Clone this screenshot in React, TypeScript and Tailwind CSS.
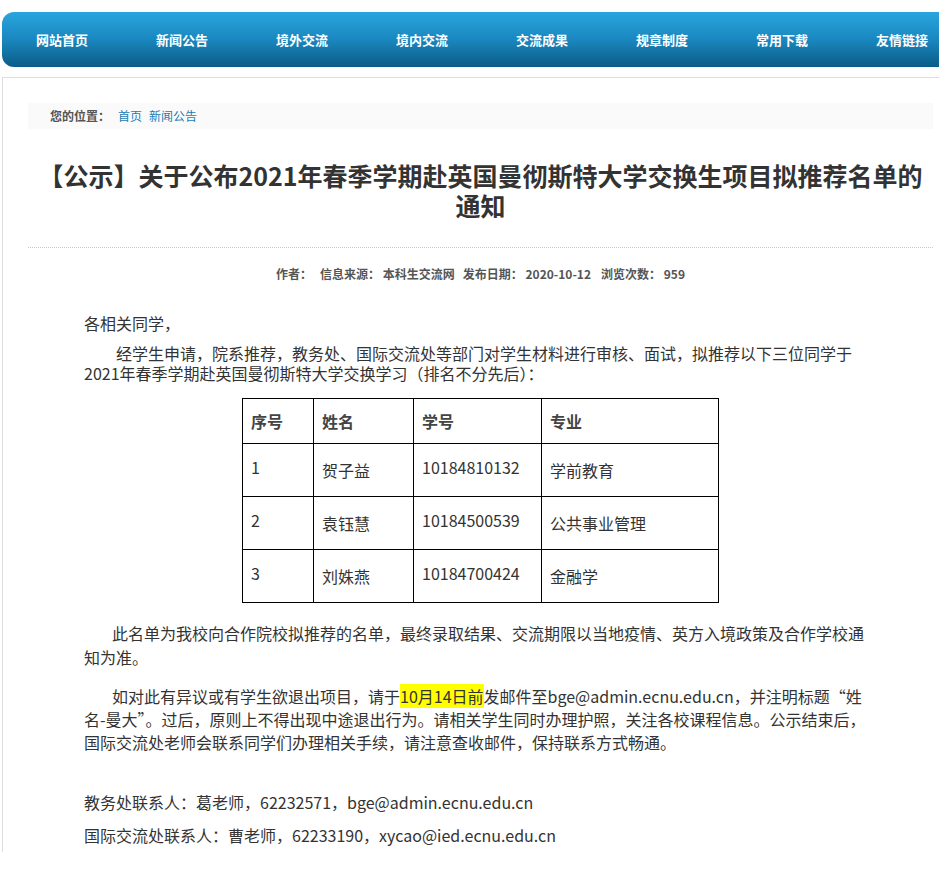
import React from "react";

const navItems = ["网站首页", "新闻公告", "境外交流", "境内交流", "交流成果", "规章制度", "常用下载", "友情链接"];

const rows = [
  ["1", "贺子益", "10184810132", "学前教育"],
  ["2", "袁钰慧", "10184500539", "公共事业管理"],
  ["3", "刘姝燕", "10184700424", "金融学"],
];

export default function App() {
  return (
    <div
      className="w-[939px] overflow-hidden bg-white"
      style={{ fontFamily: '"Noto Sans CJK SC", "Noto Sans", sans-serif' }}
    >
      <div className="ml-[2px] w-[960px] pt-[12px] pb-[40px]">
        {/* Nav */}
        <nav className="flex h-[55px] rounded-l-[12px] bg-gradient-to-b from-[#29a5de] via-[#1a87bf] to-[#0a5d88]">
          {navItems.map((t) => (
            <a
              key={t}
              className="flex w-[120px] items-center justify-center text-[13px] font-bold text-white"
            >
              {t}
            </a>
          ))}
        </nav>

        {/* Content box */}
        <div className="mt-[10px] border-l border-t border-[#dddddd] pl-[25px] pt-[25px]">
          <div className="w-[905px]">
            {/* Breadcrumb */}
            <div className="flex h-[26px] items-center bg-[#fafafa] pl-[22px] text-[12px] leading-[26px]">
              <span className="font-bold text-[#555]">您的位置：</span>
              <a className="ml-[8px] text-[#1b7cb5]">首页</a>
              <a className="ml-[7px] text-[#1b7cb5]">新闻公告</a>
            </div>

            {/* Title */}
            <h1 className="mt-[31px] text-center text-[25px] font-bold leading-[30px] text-[#333]">
              【公示】关于公布2021年春季学期赴英国曼彻斯特大学交换生项目拟推荐名单的
              <br />
              通知
            </h1>

            <div className="mt-[27px] border-t border-dotted border-[#c8c8c8]" />

            <div className="mt-[16px] flex justify-center gap-[8px] text-[12px] font-bold leading-[20px] text-[#555]">
              <span>作者：</span>
              <span>信息来源：&nbsp;本科生交流网</span>
              <span>发布日期：&nbsp;2020-10-12</span>
              <span className="ml-[2px]">浏览次数：&nbsp;959</span>
            </div>

            {/* Body */}
            <div className="px-[56px] text-[16px] text-[#333]">
              <p className="mt-[29px] leading-[20px]">各相关同学，</p>
              <p className="mt-[10px] whitespace-nowrap leading-[20px]">
                <span className="pl-[32px]">经学生申请，院系推荐，教务处、国际交流处等部门对学生材料进行审核、面试，拟推荐以下三位同学于</span>
                <br />
                2021年春季学期赴英国曼彻斯特大学交换学习（排名不分先后）：
              </p>

              <table className="mx-auto mt-[15px] border-collapse">
                <colgroup>
                  <col className="w-[71px]" />
                  <col className="w-[100px]" />
                  <col className="w-[128px]" />
                  <col className="w-[177px]" />
                </colgroup>
                <thead>
                  <tr className="h-[45px]">
                    {["序号", "姓名", "学号", "专业"].map((h) => (
                      <th
                        key={h}
                        className="border border-black px-[8px] text-left align-middle font-bold text-[#444]"
                      >
                        {h}
                      </th>
                    ))}
                  </tr>
                </thead>
                <tbody>
                  {rows.map((r) => (
                    <tr key={r[0]} className="h-[53px]">
                      {r.map((c, i) => (
                        <td
                          key={i}
                          className={`border border-black px-[8px] align-middle ${
                            i === 0 || i === 2 ? "pb-[6px]" : ""
                          }`}
                        >
                          {c}
                        </td>
                      ))}
                    </tr>
                  ))}
                </tbody>
              </table>

              <p className="mt-[18px] whitespace-nowrap leading-[24px]">
                <span className="pl-[28px]">此名单为我校向合作院校拟推荐的名单，最终录取结果、交流期限以当地疫情、英方入境政策及合作学校通</span>
                <br />
                知为准。
              </p>

              <p className="mt-[16px] whitespace-nowrap leading-[23px]">
                <span className="pl-[28px]">
                  如对此有异议或有学生欲退出项目，请于
                  <span className="bg-[#ffff00]">10月14日前</span>
                  发邮件至bge@admin.ecnu.edu.cn，并注明标题“姓
                </span>
                <br />
                名-曼大”。过后，原则上不得出现中途退出行为。请相关学生同时办理护照，关注各校课程信息。公示结束后，
                <br />
                国际交流处老师会联系同学们办理相关手续，请注意查收邮件，保持联系方式畅通。
              </p>

              <p className="mt-[32px] whitespace-nowrap leading-[33px]">
                教务处联系人：葛老师，62232571，bge@admin.ecnu.edu.cn
              </p>
              <p className="whitespace-nowrap leading-[33px]">
                国际交流处联系人：曹老师，62233190，xycao@ied.ecnu.edu.cn
              </p>
            </div>
          </div>
        </div>
      </div>
    </div>
  );
}
